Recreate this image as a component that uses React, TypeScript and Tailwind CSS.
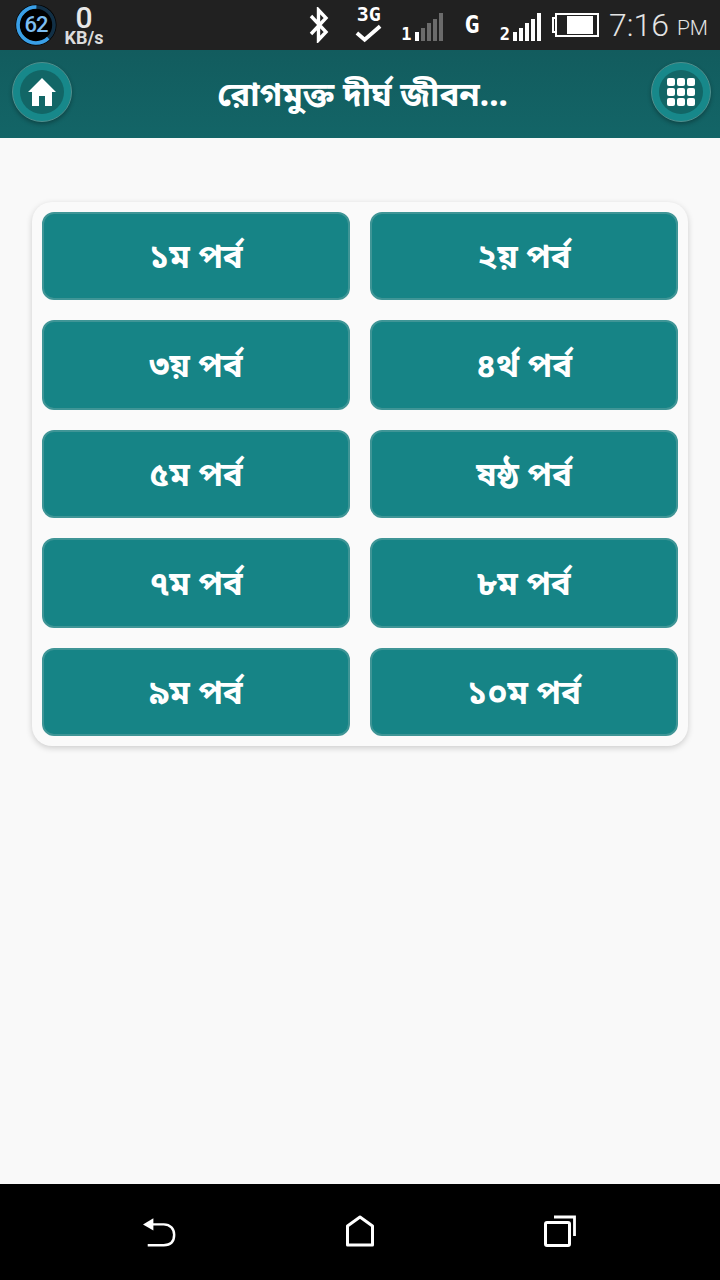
const parts = [
  "১ম পর্ব",
  "২য় পর্ব",
  "৩য় পর্ব",
  "৪র্থ পর্ব",
  "৫ম পর্ব",
  "ষষ্ঠ পর্ব",
  "৭ম পর্ব",
  "৮ম পর্ব",
  "৯ম পর্ব",
  "১০ম পর্ব",
];

const Signal = ({ label, active }: { label: string; active: number }) => (
  <div className="flex items-end gap-[2px]">
    <span className="mr-[1px] text-[17px] leading-[13px] font-bold text-white font-['DejaVu_Sans_Mono',monospace]">{label}</span>
    {[9, 13, 18, 22, 28].map((h, i) => (
      <span
        key={h}
        className={i < active ? "w-[4px] bg-white" : "w-[4px] bg-[#6b6b6b]"}
        style={{ height: h }}
      />
    ))}
  </div>
);

const StatusBar = () => (
  <div className="flex h-[50px] items-center bg-[#212121] pl-[15px] pr-[12px] text-white font-['Roboto',sans-serif]">
    <div className="relative flex h-[42px] w-[42px] items-center justify-center">
      <svg viewBox="0 0 42 42" className="absolute inset-0 h-[42px] w-[42px]">
        <circle cx="21" cy="21" r="20.5" fill="#000" />
        <circle cx="21" cy="21" r="18" fill="none" stroke="#123046" strokeWidth="3.6" />
        <circle cx="21" cy="21" r="18" fill="none" stroke="#3aa0e8" strokeWidth="3.6" strokeDasharray="70 113" transform="rotate(47 21 21)" />
      </svg>
      <span className="relative text-[22px] leading-none font-medium tracking-[-1px] text-[#7cbdf0]">62</span>
    </div>
    <div className="ml-[5px] flex w-[44px] flex-col items-center">
      <span className="mt-[1px] h-[25px] text-[30px] leading-[25px] font-medium text-[#e8e8e8]">0</span>
      <span className="text-[18px] leading-[16px] font-bold text-[#dcdcdc]">KB/s</span>
    </div>
    <svg viewBox="0 0 20 36" className="ml-auto h-[36px] w-[20px]" fill="none" stroke="#fff" strokeWidth="3.4">
      <path d="M2 9 L17 25 L9.5 33 V3 L17 11 L2 27" />
    </svg>
    <div className="ml-[25px] flex w-[29px] flex-col items-center">
      <span className="text-[20px] leading-[14px] font-bold font-['DejaVu_Sans_Mono',monospace]">3G</span>
      <svg viewBox="0 0 30 20" className="mt-[2px] h-[20px] w-[29px]" fill="none" stroke="#fff" strokeWidth="4">
        <path d="M3 10 L11 17 L27 3" />
      </svg>
    </div>
    <div className="ml-[18px] mt-[3px]">
      <Signal label="1" active={1} />
    </div>
    <span className="ml-[22px] mt-[-1px] text-[25px] leading-none font-bold font-['DejaVu_Sans_Mono',monospace]">G</span>
    <div className="ml-[20px] mt-[3px]">
      <Signal label="2" active={5} />
    </div>
    <div className="ml-[11px] flex items-center">
      <span className="h-[16px] w-[3px] border-y-2 border-l-2 border-white" />
      <span className="flex h-[24px] w-[44px] justify-end border-2 border-white px-[4px] py-[1px]">
        <span className="h-full w-[26px] bg-white" />
      </span>
    </div>
    <span className="ml-[10px] text-[32px] leading-none font-light text-[#e4e4e4]">7:16</span>
    <span className="ml-[8px] mt-[7px] text-[21px] leading-none font-light text-[#e4e4e4]">PM</span>
  </div>
);

const RoundButton = ({ children }: { children: React.ReactNode }) => (
  <div className="flex h-[60px] w-[60px] items-center justify-center rounded-full border border-[#4f8f8d] bg-[#17888a] shadow-[0_2px_4px_rgba(0,0,0,0.3)]">
    <div className="flex h-[44px] w-[44px] items-center justify-center rounded-full bg-[#126666]">{children}</div>
  </div>
);

const Header = () => (
  <div className="flex h-[88px] items-center justify-between bg-gradient-to-b from-[#125c5e] to-[#136567] pb-[4px] pl-[12px] pr-[9px]">
    <RoundButton>
      <svg viewBox="0 0 28 28" className="h-[28px] w-[28px]" fill="#fff">
        <path d="M14 0 L28 14 L24 14 L24 28 L17 28 L17 18 L11 18 L11 28 L4 28 L4 14 L0 14 Z" />
      </svg>
    </RoundButton>
    <h1 className="ml-[2px] mt-[10px] text-[33px] leading-none font-bold text-white font-['Noto_Sans_Bengali','Noto_Sans',sans-serif]">রোগমুক্ত দীর্ঘ জীবন...</h1>
    <RoundButton>
      <div className="grid grid-cols-3 gap-[2px]">
        {Array.from({ length: 9 }, (_, i) => (
          <span key={i} className="h-[8px] w-[8px] rounded-[2px] bg-white" />
        ))}
      </div>
    </RoundButton>
  </div>
);

const NavBar = () => (
  <div className="flex h-[96px] items-center justify-between bg-black pb-[2px] pl-[143px] pr-[144px]">
    <svg viewBox="0 0 36 32" className="h-[32px] w-[34px]" fill="none" stroke="#fff" strokeWidth="2.6">
      <path d="M5 31 H22 C30 31 33 26 33 20 C33 14 29 9 22 9 H8" />
      <path d="M0 9 L11 2.5 V15.5 Z" fill="#fff" stroke="none" />
    </svg>
    <svg viewBox="0 0 28 32" className="-ml-[1px] h-[32px] w-[28px]" fill="none" stroke="#fff" strokeWidth="3" strokeLinejoin="round">
      <path d="M1.5 11 L14 2 L26.5 11 V30 H1.5 Z" />
    </svg>
    <svg viewBox="0 0 32 32" className="h-[32px] w-[32px]" fill="none" stroke="#fff" strokeWidth="2.8">
      <path d="M10 2 H30.5 V21" />
      <rect x="1.5" y="7.5" width="24" height="23" rx="1.5" strokeWidth="3" />
    </svg>
  </div>
);

export default function App() {
  return (
    <div className="flex h-[1280px] w-[720px] flex-col bg-[#f9f9f9]">
      <StatusBar />
      <Header />
      <main className="flex-1 px-[32px] pt-[64px]">
        <div className="grid grid-cols-2 grid-rows-[88px_90px_88px_90px_88px] gap-5 rounded-[20px] bg-[#fafafa] p-[10px] shadow-[0_2px_6px_rgba(0,0,0,0.18)]">
          {parts.map((part) => (
            <button
              key={part}
              className="flex items-center justify-center rounded-[12px] border-2 border-[#3f9596] bg-[#168486] pt-[8px] text-[33px] font-bold text-white font-['Noto_Sans_Bengali','Noto_Sans',sans-serif]"
            >
              {part}
            </button>
          ))}
        </div>
      </main>
      <NavBar />
    </div>
  );
}
